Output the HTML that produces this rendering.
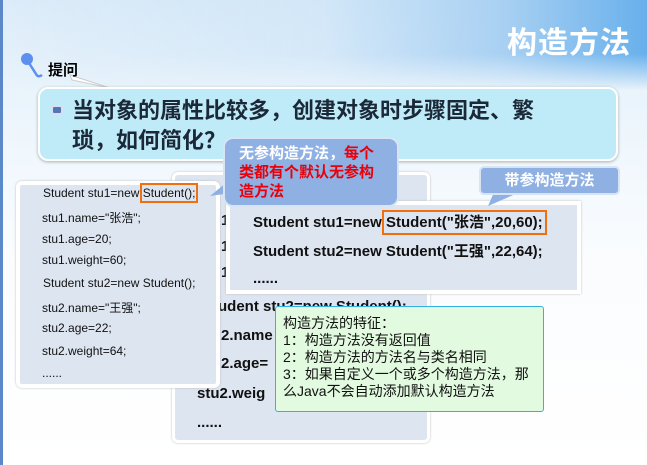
<!DOCTYPE html>
<html><head><meta charset="utf-8"><style>
*{margin:0;padding:0;box-sizing:border-box}
body{width:647px;height:465px;overflow:hidden;position:relative;font-family:"Liberation Sans","Noto Sans CJK SC",sans-serif;background:#fff}
.abs{position:absolute}
.bg{left:0;top:0;width:647px;height:465px;background:linear-gradient(180deg,#dcecf9 0%,#e8f3fb 18%,#f1f8fd 35%,#fafcfe 55%,#fff 100%)}
.hdr{left:0;top:0;width:647px;height:90px;background:linear-gradient(90deg,rgba(220,236,250,0) 0%,rgba(200,225,247,.5) 50%,#a8d0f2 78%,#68b0ec 100%);-webkit-mask:linear-gradient(180deg,#000 60%,transparent 100%)}
.lb{left:0;top:0;width:3px;height:465px;background:#5b88c8}
.title{right:16px;top:18px;font-size:30px;font-weight:bold;color:#fff;letter-spacing:1px}
.code{font-size:12px;color:#111;font-family:"Liberation Sans Narrow","Liberation Sans","Noto Sans CJK SC",sans-serif}
.big{font-size:15px;font-weight:bold;color:#111;font-family:"Liberation Sans Narrow","Liberation Sans","Noto Sans CJK SC",sans-serif;white-space:nowrap}
</style></head><body>
<div class="abs bg"></div>
<div class="abs hdr"></div>
<div class="abs lb"></div>
<div class="abs title">构造方法</div>
<svg class="abs" style="left:0;top:0" width="647" height="465">
<circle cx="27" cy="59" r="6" fill="#5d8ff0"/>
<path d="M29 63 L36 74 Q38 78 42 75" stroke="#5d8ff0" stroke-width="2.5" fill="none"/>
<path d="M70 75 L110 88 L72 80 Z" fill="#fff" stroke="#ccc"/>
</svg>
<div class="abs" style="left:48px;top:59px;font-size:15px;font-weight:bold;color:#000">提问</div>
<div class="abs" style="left:38px;top:87px;width:580px;height:74px;background:#bfeaf8;border:2px solid #fff;border-radius:10px;box-shadow:0 1px 3px rgba(0,0,0,.3)"></div>
<div class="abs" style="left:51px;top:105px;width:12px;height:10px;background:#4e78b8;border:2px solid #dde;border-radius:3px"></div>
<div class="abs" style="left:72px;top:96px;font-size:22px;font-weight:bold;color:#1b2838;line-height:30px;width:540px">当对象的属性比较多，创建对象时步骤固定、繁<br>琐，如何简化？</div>

<div class="abs" style="left:172px;top:172px;width:258px;height:271px;background:#dde5f1;border:3px solid #fff;border-radius:6px;box-shadow:0 0 2px #bbb"></div>
<div class="abs big" style="left:365px;top:184px">();</div>
<div class="abs big" style="left:221px;top:212px">1</div>
<div class="abs big" style="left:221px;top:238px">1</div>
<div class="abs big" style="left:221px;top:264px">1</div>
<div class="abs big" style="left:218px;top:298px">udent stu2=new Student();</div>
<div class="abs big" style="left:221px;top:327px">2.name</div>
<div class="abs big" style="left:221px;top:355px">2.age=</div>
<div class="abs big" style="left:197px;top:385px">stu2.weig</div>
<div class="abs big" style="left:197px;top:414px">......</div>

<div class="abs" style="left:16px;top:181px;width:204px;height:207px;background:#dde5f1;border:4px solid #fff;border-radius:6px;box-shadow:0 0 2px #bbb"></div>
<div class="abs code" style="left:43px;top:186px">Student stu1=new <span style="outline:2px solid #f07010;outline-offset:1px">Student();</span></div>
<div class="abs code" style="left:42px;top:209px">stu1.name="张浩";</div>
<div class="abs code" style="left:42px;top:232px">stu1.age=20;</div>
<div class="abs code" style="left:42px;top:253px">stu1.weight=60;</div>
<div class="abs code" style="left:43px;top:276px">Student stu2=new Student();</div>
<div class="abs code" style="left:42px;top:299px">stu2.name="王强";</div>
<div class="abs code" style="left:42px;top:321px">stu2.age=22;</div>
<div class="abs code" style="left:42px;top:344px">stu2.weight=64;</div>
<div class="abs code" style="left:42px;top:366px">......</div>

<div class="abs" style="left:226px;top:201px;width:355px;height:93px;background:#dde5f1;border:4px solid #fff;box-shadow:0 0 2px #bbb"></div>
<div class="abs big" style="left:253px;top:211px">Student stu1=new <span style="outline:2px solid #f07010;outline-offset:2px">Student("张浩",20,60);</span></div>
<div class="abs big" style="left:253px;top:240px">Student stu2=new Student("王强",22,64);</div>
<div class="abs big" style="left:253px;top:270px">......</div>

<svg class="abs" style="left:0;top:0" width="647" height="465">
<path d="M232 178 L210 196 L238 192 Z" fill="#8eb0e2"/>
<path d="M495 190 L488 206 L520 192 Z" fill="#8eb0e2"/>
</svg>
<div class="abs" style="left:223px;top:137px;width:176px;height:70px;background:#8eb0e2;border:2px solid #d8e4f4;border-radius:10px;padding:5px 0 0 14px;font-size:15px;font-weight:bold;line-height:19px;color:#fff;white-space:nowrap">无参构造方法，<span style="color:#e8000a">每个<br>类都有个默认无参构<br>造方法</span></div>
<div class="abs" style="left:479px;top:166px;width:141px;height:29px;background:#8eb0e2;border:2px solid #d8e4f4;border-radius:5px;text-align:center;font-size:15px;font-weight:bold;line-height:25px;color:#fff">带参构造方法</div>

<div class="abs" style="left:275px;top:306px;width:269px;height:106px;background:#e2fae0;border:1.5px solid #34b0e4;border-radius:3px;padding:8px 0 0 7px;font-size:14px;line-height:17px;color:#111;white-space:nowrap">构造方法的特征：<br>1：构造方法没有返回值<br>2：构造方法的方法名与类名相同<br>3：如果自定义一个或多个构造方法，那<br>么Java不会自动添加默认构造方法</div>
</body></html>
